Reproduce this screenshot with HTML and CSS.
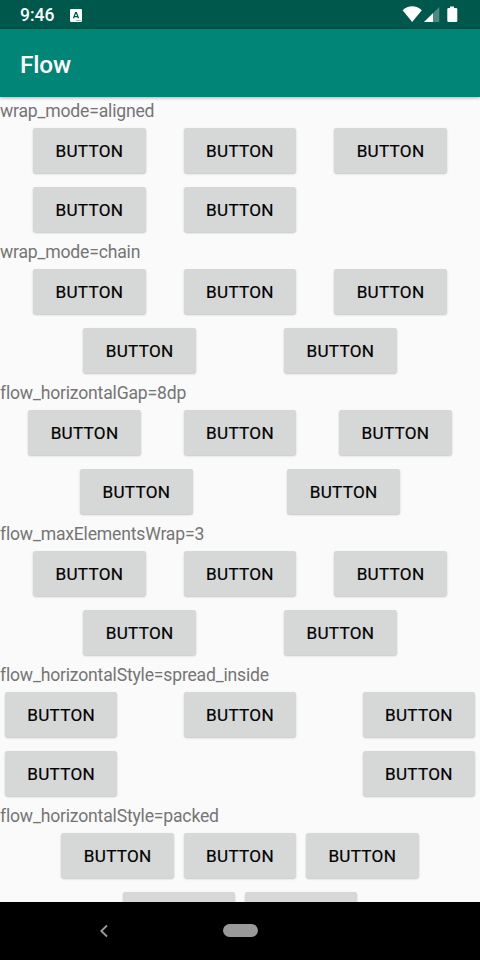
FILE: index.html
```html
<!DOCTYPE html>
<html lang="en">
<head>
<meta charset="utf-8">
<title>Flow</title>
<link rel="stylesheet" href="styles.css">
</head>
<body>
<div class="screen">
  <header class="status">
    <span class="clock">9:46</span>
    <svg class="notice" width="12" height="13" viewBox="0 0 12 13"><rect width="12" height="13" rx="1.2" fill="#fff"/><path d="M3.500 9.200 5.600 3.600h.8L8.500 9.200M4.300 7.600h3.400" fill="none" stroke="#00574b" stroke-width="1.300"/><path d="M6 11.5h5" stroke="#9bbdb7"/></svg>
    <svg class="indicators" width="60" height="20" viewBox="0 0 60 20"><path d="M.6 5.2C6-.1 14.400-.1 19.800 5.200L10.200 17Z" fill="#fff"/><path d="M37.300 2v15H22Z" fill="#4d8981"/><path d="M31 8.200V17h-9Z" fill="#fff"/><path d="M48 1.500h4V3h2q1.300 0 1.300 1.300v11.400q0 1.300-1.300 1.300h-7.400q-1.300 0-1.300-1.300V4.300Q45.300 3 46.600 3H48Z" fill="#fff"/></svg>
  </header>
  <h1 class="appbar">Flow</h1>
  <main class="content">
    <section>
      <h2>wrap_mode=aligned</h2>
      <div class="row"><button>BUTTON</button><button>BUTTON</button><button>BUTTON</button></div>
      <div class="row"><button>BUTTON</button><button>BUTTON</button><span class="blank"></span></div>
    </section>
    <section>
      <h2>wrap_mode=chain</h2>
      <div class="row"><button>BUTTON</button><button>BUTTON</button><button>BUTTON</button></div>
      <div class="row"><button>BUTTON</button><button>BUTTON</button></div>
    </section>
    <section class="gapped">
      <h2>flow_horizontalGap=8dp</h2>
      <div class="row"><button>BUTTON</button><button>BUTTON</button><button>BUTTON</button></div>
      <div class="row"><button>BUTTON</button><button>BUTTON</button></div>
    </section>
    <section>
      <h2>flow_maxElementsWrap=3</h2>
      <div class="row"><button>BUTTON</button><button>BUTTON</button><button>BUTTON</button></div>
      <div class="row"><button>BUTTON</button><button>BUTTON</button></div>
    </section>
    <section class="inside">
      <h2>flow_horizontalStyle=spread_inside</h2>
      <div class="row"><button>BUTTON</button><button>BUTTON</button><button>BUTTON</button></div>
      <div class="row"><button>BUTTON</button><button>BUTTON</button></div>
    </section>
    <section class="packed">
      <h2>flow_horizontalStyle=packed</h2>
      <div class="row"><button>BUTTON</button><button>BUTTON</button><button>BUTTON</button></div>
      <div class="row"><button></button><button></button></div>
    </section>
  </main>
  <nav class="navbar">
    <svg class="back" width="10" height="14" viewBox="0 0 10 14"><path d="M8 1.500 2.300 7 8 12.500" fill="none" stroke="#999" stroke-width="1.900"/></svg>
    <span class="home"></span>
  </nav>
</div>
</body>
</html>
```
FILE: styles.css
```css
* { box-sizing: border-box; }
body { margin: 0; font-family: Roboto, sans-serif; }
.screen {
  width: 480px;
  height: 960px;
  display: flex;
  flex-direction: column;
  overflow: hidden;
  background: #fafafa;
}
.status {
  height: 29px;
  flex: none;
  display: flex;
  align-items: center;
  padding: 0 18px 0 20px;
  background: #00574b;
  color: #fff;
}
.clock { font-size: 17.500px; font-weight: 500; line-height: 31px; padding-top: 1px; width: 50px; }
.notice { margin-top: 1px; }
.indicators { margin-left: auto; margin-top: 5px; align-self: flex-start; }
.appbar {
  height: 68px;
  flex: none;
  margin: 0;
  padding-left: 20px;
  line-height: 72px;
  font-size: 24.400px;
  font-weight: 500;
  letter-spacing: -0.150px;
  color: #fff;
  background: #008577;
  box-shadow: 0 1px 3px rgba(0, 0, 0, 0.300);
  z-index: 1;
}
.content { flex: 1; min-height: 0; overflow: hidden; }
section { height: 140.950px; }
h2 {
  margin: 0;
  height: 24.450px;
  line-height: 28px;
  font-size: 17.600px;
  font-weight: 400;
  letter-spacing: -0.190px;
  color: #757575;
  white-space: nowrap;
}
.row { display: flex; justify-content: space-evenly; height: 58.670px; }
.gapped .row { gap: 9.780px; }
.inside .row { justify-content: space-between; }
.packed .row { justify-content: center; }
.blank { width: 122.300px; }
button {
  width: 112.500px;
  height: 45px;
  margin: 6.830px 4.900px;
  padding: 1.200px 0 0;
  border: 0;
  border-radius: 2.400px;
  background: #d6d7d7;
  box-shadow: 0 1px 2px rgba(0, 0, 0, 0.220);
  color: #000;
  font: 400 17.100px Roboto, sans-serif;
  letter-spacing: 0.300px;
  -webkit-text-stroke: 0.200px #000;
}
.navbar {
  height: 58.300px;
  flex: none;
  display: flex;
  align-items: center;
  background: #000;
}
.back { margin-left: 99px; }
.home { width: 35px; height: 13px; margin-left: 114px; border-radius: 7px; background: #999; }
```
